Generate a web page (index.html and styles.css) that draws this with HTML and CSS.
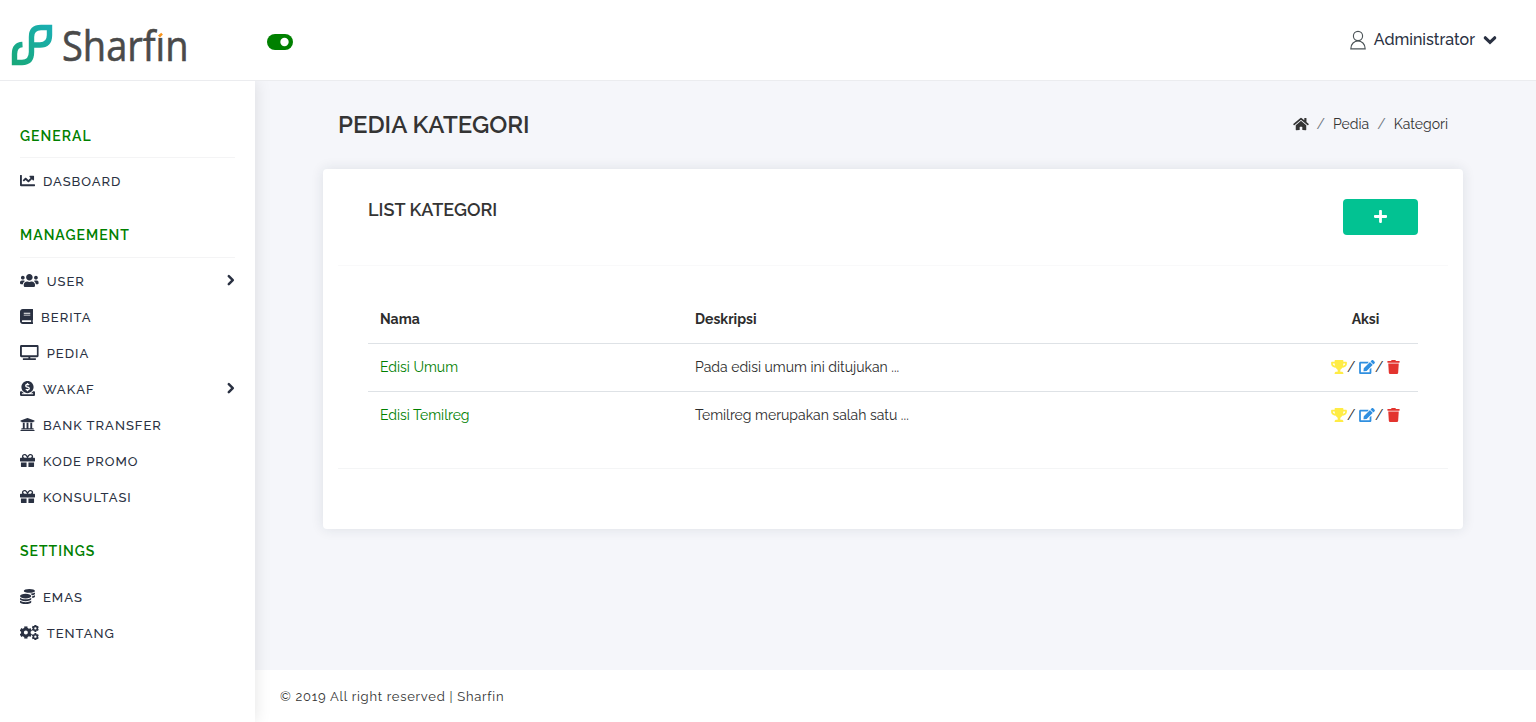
FILE: index.html
```html
<!DOCTYPE html>
<html lang="id">
<head>
<meta charset="utf-8">
<title>Sharfin</title>
<link rel="stylesheet" href="styles.css">
</head>
<body>
<svg class="sprite" width="0" height="0">
<symbol id="chart" viewBox="0 0 512 512"><path d="M496 384H64V80c0-8.84-7.16-16-16-16H16C7.16 64 0 71.16 0 80v336c0 17.67 14.33 32 32 32h464c8.84 0 16-7.16 16-16v-32c0-8.84-7.16-16-16-16zM464 96H345.94c-21.38 0-32.09 25.85-16.97 40.97l32.4 32.4L288 242.75l-73.37-73.37c-12.5-12.5-32.76-12.5-45.25 0l-68.69 68.69c-6.25 6.25-6.25 16.38 0 22.63l22.62 22.62c6.25 6.25 16.38 6.25 22.63 0L192 237.25l73.37 73.37c12.5 12.5 32.76 12.5 45.25 0l96-96 32.4 32.4c15.12 15.12 40.97 4.41 40.97-16.97V112c.01-8.84-7.15-16-15.99-16z"/></symbol>
<symbol id="users" viewBox="0 0 640 512"><path d="M96 224c35.3 0 64-28.7 64-64s-28.7-64-64-64-64 28.7-64 64 28.7 64 64 64zm448 0c35.3 0 64-28.7 64-64s-28.7-64-64-64-64 28.7-64 64 28.7 64 64 64zm32 32h-64c-17.6 0-33.5 7.1-45.1 18.6 40.3 22.1 68.9 62 75.1 109.4h66c17.7 0 32-14.3 32-32v-32c0-35.3-28.7-64-64-64zm-256 0c61.9 0 112-50.1 112-112S381.900 32 320 32 208 82.100 208 144s50.100 112 112 112zm76.800 32h-8.300c-20.800 10-43.900 16-68.500 16s-47.600-6-68.500-16h-8.300C179.600 288 128 339.600 128 403.200V432c0 26.500 21.500 48 48 48h288c26.500 0 48-21.500 48-48v-28.800c0-63.600-51.600-115.200-115.200-115.200zm-223.700-13.400C161.500 263.100 145.600 256 128 256H64c-35.300 0-64 28.700-64 64v32c0 17.700 14.300 32 32 32h65.900c6.300-47.400 34.900-87.300 75.200-109.400z"/></symbol>
<symbol id="book" viewBox="0 0 448 512"><path d="M448 360V24c0-13.300-10.700-24-24-24H96C43 0 0 43 0 96v320c0 53 43 96 96 96h328c13.300 0 24-10.700 24-24v-16c0-7.500-3.500-14.300-8.900-18.700-4.200-15.400-4.200-59.300 0-74.700 5.400-4.300 8.900-11.100 8.900-18.600zM128 134c0-3.300 2.700-6 6-6h212c3.300 0 6 2.700 6 6v20c0 3.300-2.700 6-6 6H134c-3.300 0-6-2.700-6-6v-20zm0 64c0-3.300 2.700-6 6-6h212c3.300 0 6 2.700 6 6v20c0 3.300-2.700 6-6 6H134c-3.300 0-6-2.700-6-6v-20zm253.400 250H96c-17.700 0-32-14.300-32-32 0-17.600 14.400-32 32-32h285.400c-1.900 17.100-1.900 46.900 0 64z"/></symbol>
<symbol id="tv" viewBox="0 0 640 512"><path d="M592 0H48A48 48 0 0 0 0 48v320a48 48 0 0 0 48 48h240v32H112a16 16 0 0 0-16 16v32a16 16 0 0 0 16 16h416a16 16 0 0 0 16-16v-32a16 16 0 0 0-16-16H352v-32h240a48 48 0 0 0 48-48V48a48 48 0 0 0-48-48zm-16 352H64V64h512z"/></symbol>
<symbol id="donate" viewBox="0 0 512 512"><path d="M256 416c114.900 0 208-93.100 208-208S370.900 0 256 0 48 93.100 48 208s93.100 208 208 208zM233.800 97.400V80.600c0-9.200 7.400-16.600 16.600-16.600h11.100c9.200 0 16.600 7.400 16.600 16.600v17c15.500.8 30.500 6.100 43 15.400 5.600 4.100 6.200 12.300 1.200 17.100L306 145.600c-3.800 3.700-9.500 3.800-14 1-5.400-3.400-11.400-5.100-17.800-5.100h-38.900c-9 0-16.300 8.200-16.300 18.300 0 8.200 5 15.500 12.100 17.600l62.300 18.700c25.700 7.700 43.700 32.400 43.700 60.100 0 34-26.400 61.500-59.100 62.400v16.800c0 9.200-7.400 16.600-16.600 16.600h-11.100c-9.200 0-16.600-7.400-16.600-16.600v-17c-15.500-.8-30.500-6.100-43-15.400-5.600-4.100-6.200-12.300-1.200-17.100l16.300-15.500c3.800-3.700 9.500-3.800 14-1 5.400 3.400 11.400 5.100 17.800 5.100h38.900c9 0 16.300-8.200 16.300-18.300 0-8.200-5-15.500-12.100-17.600l-62.300-18.700c-25.700-7.700-43.700-32.400-43.700-60.100.1-34 26.400-61.500 59.100-62.400zM480 352h-32.500c-19.600 26-44.600 47.700-73 64h63.800c5.300 0 9.600 3.600 9.600 8v16c0 4.400-4.300 8-9.600 8H73.600c-5.300 0-9.600-3.600-9.600-8v-16c0-4.400 4.300-8 9.600-8h63.800c-28.400-16.300-53.300-38-73-64H32c-17.700 0-32 14.300-32 32v96c0 17.700 14.300 32 32 32h448c17.700 0 32-14.300 32-32v-96c0-17.700-14.300-32-32-32z"/></symbol>
<symbol id="bank" viewBox="0 0 512 512"><path d="M496 128v16a8 8 0 0 1-8 8h-24v12c0 6.627-5.373 12-12 12H60c-6.627 0-12-5.373-12-12v-12H24a8 8 0 0 1-8-8v-16a8 8 0 0 1 4.941-7.392l232-88a7.996 7.996 0 0 1 6.118 0l232 88A8 8 0 0 1 496 128zm-24 304H40c-13.255 0-24 10.745-24 24v16a8 8 0 0 0 8 8h464a8 8 0 0 0 8-8v-16c0-13.255-10.745-24-24-24zM96 192v192H60c-6.627 0-12 5.373-12 12v20h416v-20c0-6.627-5.373-12-12-12h-36V192h-64v192h-64V192h-64v192h-64V192H96z"/></symbol>
<symbol id="gift" viewBox="0 0 512 512"><path d="M32 448c0 17.700 14.300 32 32 32h160V320H32v128zm256 32h160c17.700 0 32-14.300 32-32V320H288v160zm192-320h-42.100c6.200-12.100 10.100-25.500 10.100-40 0-48.500-39.500-88-88-88-41.600 0-68.500 21.300-103 68.300-34.500-47-61.400-68.300-103-68.300-48.500 0-88 39.500-88 88 0 14.500 3.800 27.900 10.100 40H32c-17.700 0-32 14.300-32 32v80c0 8.800 7.200 16 16 16h480c8.800 0 16-7.200 16-16v-80c0-17.700-14.300-32-32-32zm-326.100 0c-22.100 0-40-17.900-40-40s17.900-40 40-40c19.900 0 34.600 3.300 86.100 80h-86.100zm206.100 0h-86.100c51.400-76.500 65.700-80 86.100-80 22.100 0 40 17.900 40 40s-17.900 40-40 40z"/></symbol>
<symbol id="coins" viewBox="0 0 512 512"><path d="M0 405.300V448c0 35.300 86 64 192 64s192-28.700 192-64v-42.700C342.700 434.400 267.200 448 192 448S41.300 434.400 0 405.300zM320 128c106 0 192-28.700 192-64S426 0 320 0 128 28.700 128 64s86 64 192 64zM0 300.400V352c0 35.300 86 64 192 64s192-28.700 192-64v-51.600c-41.300 34-116.900 51.600-192 51.600S41.300 334.400 0 300.400zm416 11c57.300-11.100 96-31.700 96-55.400v-42.700c-23.200 16.400-57.300 27.600-96 34.500v63.600zM192 160C86 160 0 195.800 0 240s86 80 192 80 192-35.800 192-80-86-80-192-80zm219.300 56.300c60-10.800 100.700-32 100.700-56.300v-42.700c-35.500 25.100-96.500 38.600-160.700 41.800 29.500 14.300 51.200 33.500 60 57.200z"/></symbol>
<symbol id="gear" viewBox="-200 -200 400 400"><circle r="110" fill="none" stroke="currentColor" stroke-width="90"/><g stroke="currentColor" stroke-width="104"><path d="M0-198V-110M0 198V110"/><path d="M0-198V-110M0 198V110" transform="rotate(60)"/><path d="M0-198V-110M0 198V110" transform="rotate(120)"/></g></symbol>
<symbol id="cogs" viewBox="0 0 640 512"><use href="#gear" x="-12" y="44" width="424" height="424"/><use href="#gear" x="402" y="-8" width="246" height="246"/><use href="#gear" x="402" y="276" width="246" height="246"/></symbol>
<symbol id="right" viewBox="0 0 9 14"><path d="M2.800 3.200L6.800 7.200L2.800 11.200" fill="none" stroke="currentColor" stroke-width="2.500" stroke-linecap="round" stroke-linejoin="round"/></symbol>
<symbol id="down" viewBox="0 0 14 16"><path d="M2.300 5.800L7 10.300L11.700 5.800" fill="none" stroke="currentColor" stroke-width="3.200" stroke-linecap="round"/></symbol>
<symbol id="home" viewBox="0 0 576 512"><path d="M280.370 148.260L96 300.110V464a16 16 0 0 0 16 16l112.060-.29a16 16 0 0 0 15.920-16V368a16 16 0 0 1 16-16h64a16 16 0 0 1 16 16v95.640a16 16 0 0 0 16 16.050L464 480a16 16 0 0 0 16-16V300L295.670 148.260a12.190 12.190 0 0 0-15.300 0zM571.600 251.470L488 182.560V44.050a12 12 0 0 0-12-12h-56a12 12 0 0 0-12 12v72.610L318.470 43a48 48 0 0 0-61 0L4.340 251.470a12 12 0 0 0-1.600 16.900l25.500 31A12 12 0 0 0 45.150 301l235.220-193.740a12.190 12.190 0 0 1 15.300 0L530.900 301a12 12 0 0 0 16.900-1.600l25.500-31a12 12 0 0 0-1.700-16.930z"/></symbol>
<symbol id="plus" viewBox="0 0 448 512"><path d="M416 208H272V64c0-17.670-14.330-32-32-32h-32c-17.670 0-32 14.330-32 32v144H32c-17.670 0-32 14.330-32 32v32c0 17.670 14.330 32 32 32h144v144c0 17.670 14.330 32 32 32h32c17.670 0 32-14.330 32-32V304h144c17.670 0 32-14.330 32-32v-32c0-17.670-14.330-32-32-32z"/></symbol>
<symbol id="trophy" viewBox="0 0 576 512"><path d="M552 64H448V24c0-13.300-10.700-24-24-24H152c-13.300 0-24 10.700-24 24v40H24C10.700 64 0 74.700 0 88v56c0 35.700 22.500 72.400 61.900 100.700 31.500 22.700 69.800 37.100 110 41.700C203.300 338.500 240 360 240 360v72h-48c-35.300 0-64 20.700-64 56v12c0 6.600 5.400 12 12 12h296c6.600 0 12-5.400 12-12v-12c0-35.300-28.700-56-64-56h-48v-72s36.700-21.500 68.100-73.600c40.300-4.600 78.600-19 110-41.700 39.300-28.300 61.900-65 61.900-100.700V88c0-13.300-10.700-24-24-24zM99.300 192.800C74.900 175.200 64 155.600 64 144v-16h64.200c1 32.600 5.800 61.200 12.800 86.200-15.100-5.200-29.200-12.400-41.700-21.400zM512 144c0 16.100-17.700 36.100-35.300 48.800-12.500 9-26.700 16.200-41.800 21.400 7-25 11.800-53.600 12.800-86.200H512v16z"/></symbol>
<symbol id="edit" viewBox="0 0 576 512"><path d="M402.600 83.200l90.200 90.200c3.800 3.800 3.800 10 0 13.800L274.400 405.600l-92.800 10.300c-12.400 1.400-22.900-9.100-21.500-21.500l10.300-92.800L388.800 83.200c3.800-3.800 10-3.800 13.800 0zm162-22.900l-48.800-48.800c-15.200-15.200-39.900-15.200-55.200 0l-35.400 35.400c-3.800 3.800-3.800 10 0 13.800l90.200 90.200c3.800 3.800 10 3.800 13.800 0l35.400-35.400c15.200-15.300 15.200-40 0-55.200zM384 346.200V448H64V128h229.800c3.200 0 6.200-1.300 8.500-3.500l40-40c7.600-7.600 2.200-20.500-8.500-20.500H48C21.500 64 0 85.500 0 112v352c0 26.500 21.500 48 48 48h352c26.500 0 48-21.500 48-48V306.200c0-10.700-12.900-16-20.500-8.500l-40 40c-2.200 2.300-3.500 5.300-3.500 8.500z"/></symbol>
<symbol id="trash" viewBox="0 0 448 512"><path d="M432 32H312l-9.400-18.700A24 24 0 0 0 281.100 0H166.800a23.720 23.720 0 0 0-21.400 13.300L136 32H16A16 16 0 0 0 0 48v32a16 16 0 0 0 16 16h416a16 16 0 0 0 16-16V48a16 16 0 0 0-16-16zM53.200 467a48 48 0 0 0 47.900 45h245.800a48 48 0 0 0 47.900-45L416 128H32z"/></symbol>
</svg>

<header class="header">
  <svg class="logo" width="220" height="80" viewBox="0 0 220 80">
    <defs><linearGradient id="leaf" x1="12" y1="65" x2="52" y2="25" gradientUnits="userSpaceOnUse"><stop offset="0" stop-color="#18a878"/><stop offset="1" stop-color="#1aafb4"/></linearGradient></defs>
    <path d="M31.500 46V37Q31.500 27.500 41 27.500H49.500V35Q49.500 45 40 45H33M31.500 43V52Q31.500 62.500 22 62.500H14.500V54Q14.500 45 22.500 44.500" fill="none" stroke="url(#leaf)" stroke-width="5.400"/>
    <text class="logo-text" x="62" y="60.500" textLength="126.500" lengthAdjust="spacingAndGlyphs">Sharfin</text>
    <path d="M157.500 27h8v10.600h-8z" fill="#fff"/><path d="M158 35.500l3.200-2.700 1.700 1.800-2.900 3z" fill="#f7941d"/>
  </svg>
  <svg class="toggle" width="26" height="16" viewBox="0 0 26 16"><rect width="26" height="16" rx="8" fill="#008000"/><circle cx="17.500" cy="8" r="4.200" fill="#fff"/></svg>
  <div class="account">
    <svg class="person" width="16" height="20" viewBox="0 0 16 20"><circle cx="8" cy="6" r="4.600"/><path d="M.8 18.900C.8 8.400 15.200 8.400 15.200 18.900z"/></svg>
    <span>Administrator</span>
    <svg class="caret" width="14" height="16"><use href="#down"/></svg>
  </div>
</header>

<div class="shell">
  <nav class="sidebar">
    <h6 class="group"><span>GENERAL</span></h6>
    <ul class="menu">
      <li><svg class="i16"><use href="#chart"/></svg><span>DASBOARD</span></li>
    </ul>
    <h6 class="group"><span>MANAGEMENT</span></h6>
    <ul class="menu">
      <li><svg class="i20"><use href="#users"/></svg><span>USER</span><svg class="more"><use href="#right"/></svg></li>
      <li><svg class="i14"><use href="#book"/></svg><span>BERITA</span></li>
      <li><svg class="i20"><use href="#tv"/></svg><span>PEDIA</span></li>
      <li><svg class="i16"><use href="#donate"/></svg><span>WAKAF</span><svg class="more"><use href="#right"/></svg></li>
      <li><svg class="i16"><use href="#bank"/></svg><span>BANK TRANSFER</span></li>
      <li><svg class="i16"><use href="#gift"/></svg><span>KODE PROMO</span></li>
      <li><svg class="i16"><use href="#gift"/></svg><span>KONSULTASI</span></li>
    </ul>
    <h6 class="group plain"><span>SETTINGS</span></h6>
    <ul class="menu">
      <li><svg class="i16"><use href="#coins"/></svg><span>EMAS</span></li>
      <li><svg class="i20"><use href="#cogs"/></svg><span>TENTANG</span></li>
    </ul>
  </nav>

  <div class="page">
    <main class="content">
      <div class="title-row">
        <h3>PEDIA KATEGORI</h3>
        <div class="crumbs"><svg width="16" height="14"><use href="#home"/></svg><i>/</i><span>Pedia</span><i>/</i><span>Kategori</span></div>
      </div>
      <section class="card">
        <div class="card-head"><h5>LIST KATEGORI</h5><button class="add"><svg width="13" height="15"><use href="#plus"/></svg></button></div>
        <div class="card-body">
          <table>
            <thead><tr><th class="name">Nama</th><th>Deskripsi</th><th class="act">Aksi</th></tr></thead>
            <tbody>
              <tr><td class="link">Edisi Umum</td><td>Pada edisi umum ini ditujukan ...</td><td class="act"><div class="actions"><svg class="trophy"><use href="#trophy"/></svg><b>/</b><svg class="edit"><use href="#edit"/></svg><b>/</b><svg class="trash"><use href="#trash"/></svg></div></td></tr>
              <tr><td class="link">Edisi Temilreg</td><td>Temilreg merupakan salah satu ...</td><td class="act"><div class="actions"><svg class="trophy"><use href="#trophy"/></svg><b>/</b><svg class="edit"><use href="#edit"/></svg><b>/</b><svg class="trash"><use href="#trash"/></svg></div></td></tr>
            </tbody>
          </table>
        </div>
      </section>
    </main>
    <footer class="footer">© 2019 All right reserved | Sharfin</footer>
  </div>
</div>
</body>
</html>
```
FILE: styles.css
```css
* { box-sizing: border-box; }
body { margin: 0; height: 722px; overflow: hidden; display: flex; flex-direction: column; background: #fff; color: #2d2d2d; font: 14px/20px Raleway, Lato, sans-serif; }
svg { fill: currentColor; flex: none; display: block; }
.sprite { display: none; }
h3, h5, h6, ul { margin: 0; padding: 0; }

.header { height: 81px; flex: none; display: flex; border-bottom: 1px solid #ebecef; }
.logo-text { font: 42px "Open Sans", sans-serif; fill: #4a4a4a; stroke: #4a4a4a; stroke-width: .6px; font-variant-ligatures: none; }
.toggle { margin: 34px 0 0 47px; }
.account { margin: 29px 39px 0 auto; height: 22px; display: flex; align-items: center; font-size: 16px; font-weight: 500; color: #2a3142; }
.account span { margin: 0 8px; }
.person { fill: none; stroke: #4b5357; stroke-width: 1.150px; }

.shell { flex: 1; display: flex; min-height: 0; }
.sidebar { width: 255px; flex: none; padding: 36px 20px 0; background: #fff; box-shadow: 1px 0 15px rgba(0, 0, 0, .1); clip-path: inset(0 -30px 0 0); z-index: 1; }
.group { height: 41px; padding-top: 8px; border-bottom: 1px solid #f4f4f5; font-size: 14px; line-height: 22px; font-weight: 600; letter-spacing: 1px; color: #008000; }
.menu { list-style: none; padding: 5px 0; }
.menu + .group { height: 42px; margin-top: 12px; }
.menu + .plain { border-color: transparent; }
.menu li { height: 36px; display: flex; align-items: center; font-size: 13px; font-weight: 500; letter-spacing: 1px; color: #2a3142; }
.menu span { margin-left: 8px; padding-top: 1px; }
.menu svg { height: 15px; margin-top: -1px; }
.i14 { width: 13.100px; }
.i16 { width: 15px; }
.i20 { width: 18.750px; }
.menu .more { width: 9px; height: 14px; margin: -2px 0 0 auto; }

.page { flex: 1; display: flex; flex-direction: column; }
.content { flex: 1; padding: 0 73px 0 68px; background: #f5f6fa; }
.title-row { height: 88px; padding: 0 15px; display: flex; justify-content: space-between; align-items: center; }
h3 { font-size: 24px; font-weight: 600; color: #343434; }
.crumbs { display: flex; align-items: center; margin-bottom: 2px; color: #343434; }
.crumbs i { margin: 0 8px; font-style: normal; color: #6c757d; }
.card { height: 360px; padding: 0 15px; border-radius: 4px; background: #fff; box-shadow: 0 0 13px rgba(31, 45, 61, .11); }
.card-head { height: 97px; padding: 30px 30px 0; display: flex; justify-content: space-between; align-items: flex-start; border-bottom: 1px solid #f9f9fa; }
h5 { font-size: 18px; line-height: 22px; font-weight: 600; color: #343434; }
.add { width: 75px; height: 36px; padding: 0 0 2px; border: 0; border-radius: 4px; background: #02c292; color: #fff; display: flex; justify-content: center; align-items: center; }
.card-body { height: 203px; padding: 29px 30px 0; border-bottom: 1px solid #f4f5f6; }
table { width: 100%; border-collapse: collapse; table-layout: fixed; }
th, td { height: 48px; padding: 0 12px; text-align: left; }
td { border-top: 1px solid #dee2e6; }
.name { width: 315px; }
.link { color: #008000; }
.act { width: 105px; text-align: center; }
.actions { display: flex; align-items: center; justify-content: center; }
.actions b { font-weight: 400; width: 8px; }
.actions svg { height: 14px; }
.trophy { width: 16px; color: #ffec45; }
.edit { width: 16px; margin-left: 4px; color: #2f8fe0; }
.trash { width: 13px; margin-left: 4px; color: #e3342f; }
.footer { height: 52px; flex: none; padding: 0 25px; font-size: 13px; line-height: 53px; letter-spacing: .73px; color: #333; }
```
